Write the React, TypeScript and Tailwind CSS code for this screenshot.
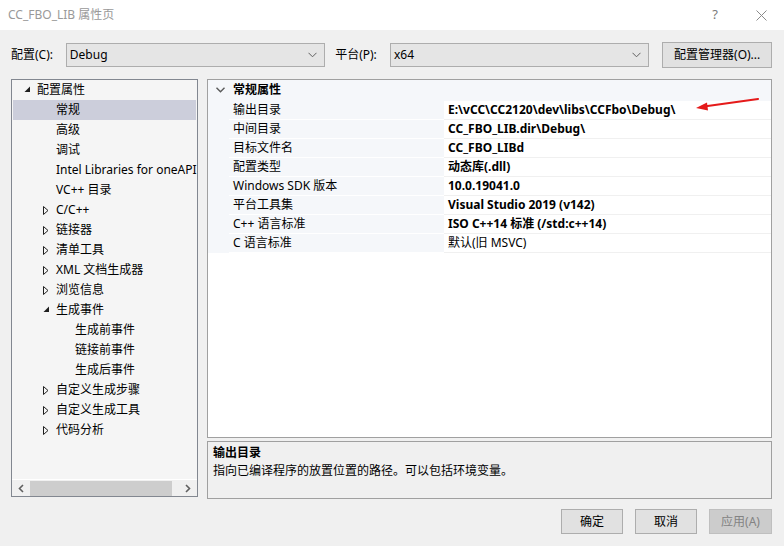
import React from 'react'

const font = { fontFamily: '"Noto Sans", "Noto Sans CJK SC", sans-serif' }

type TreeItem = { label: string; level: number; state?: 'open' | 'closed'; selected?: boolean }

const tree: TreeItem[] = [
  { label: '配置属性', level: 0, state: 'open' },
  { label: '常规', level: 1, selected: true },
  { label: '高级', level: 1 },
  { label: '调试', level: 1 },
  { label: 'Intel Libraries for oneAPI', level: 1 },
  { label: 'VC++ 目录', level: 1 },
  { label: 'C/C++', level: 1, state: 'closed' },
  { label: '链接器', level: 1, state: 'closed' },
  { label: '清单工具', level: 1, state: 'closed' },
  { label: 'XML 文档生成器', level: 1, state: 'closed' },
  { label: '浏览信息', level: 1, state: 'closed' },
  { label: '生成事件', level: 1, state: 'open' },
  { label: '生成前事件', level: 2 },
  { label: '链接前事件', level: 2 },
  { label: '生成后事件', level: 2 },
  { label: '自定义生成步骤', level: 1, state: 'closed' },
  { label: '自定义生成工具', level: 1, state: 'closed' },
  { label: '代码分析', level: 1, state: 'closed' },
]

const props: { name: string; value: string; bold: boolean }[] = [
  { name: '输出目录', value: 'E:\\vCC\\CC2120\\dev\\libs\\CCFbo\\Debug\\', bold: true },
  { name: '中间目录', value: 'CC_FBO_LIB.dir\\Debug\\', bold: true },
  { name: '目标文件名', value: 'CC_FBO_LIBd', bold: true },
  { name: '配置类型', value: '动态库(.dll)', bold: true },
  { name: 'Windows SDK 版本', value: '10.0.19041.0', bold: true },
  { name: '平台工具集', value: 'Visual Studio 2019 (v142)', bold: true },
  { name: 'C++ 语言标准', value: 'ISO C++14 标准 (/std:c++14)', bold: true },
  { name: 'C 语言标准', value: '默认(旧 MSVC)', bold: false },
]

// left offset of each tree level, inside the panel
const indent = [6, 25, 44]

function Chevron() {
  return (
    <svg width="9" height="6" viewBox="0 0 9 6" className="text-[#606060]">
      <path d="M0.5 0.8 L4.5 4.8 L8.5 0.8" fill="none" stroke="currentColor" strokeWidth="1" />
    </svg>
  )
}

function Combo({ value }: { value: string }) {
  return (
    <div className="flex h-6 w-[260px] items-center justify-between border border-[#adadad] bg-[#e5e5e5] pl-[3px] pr-[7px] text-[12px] text-black">
      <span>{value}</span>
      <Chevron />
    </div>
  )
}

function Btn({ label, disabled, w }: { label: string; disabled?: boolean; w: string }) {
  return (
    <div
      className={`flex h-[25px] ${w} items-center justify-center border text-[12px] ${
        disabled ? 'border-[#bfbfbf] bg-[#cccccc] text-[#838383]' : 'border-[#adadad] bg-[#e1e1e1] text-black'
      }`}
    >
      {label}
    </div>
  )
}

export default function App() {
  return (
    <div style={font} className="relative flex h-[546px] w-[784px] flex-col overflow-hidden bg-[#f0f0f0] text-[12px] text-black">
      {/* title bar */}
      <div className="flex h-[30px] items-center bg-white pl-2 text-[12px] text-[#999999]">
        <span className="flex-1">CC_FBO_LIB 属性页</span>
        <span className="w-[46px] text-center text-[13px] text-[#7a7a7a]">?</span>
        <span className="flex w-[46px] justify-center">
          <svg width="11" height="11" viewBox="0 0 11 11">
            <path d="M0.5 0.5 L10.5 10.5 M10.5 0.5 L0.5 10.5" stroke="#8a8a8a" strokeWidth="1" />
          </svg>
        </span>
      </div>

      {/* config row */}
      <div className="mt-[12px] flex items-center pl-[11px] pr-[12px]">
        <span className="w-[55px]">配置(C):</span>
        <Combo value="Debug" />
        <span className="ml-[10px] w-[55px]">平台(P):</span>
        <Combo value="x64" />
        <div className="ml-[13px] flex h-[26px] w-[110px] items-center justify-center border border-[#adadad] bg-[#e1e1e1]">
          配置管理器(O)...
        </div>
      </div>

      {/* main */}
      <div className="mt-[11px] flex pl-[11px] pr-[12px]">
        {/* tree */}
        <div className="flex h-[418px] w-[187px] flex-col border border-[#828790] bg-[#f5f5f5]">
          <div className="flex-1 overflow-hidden px-[1px]">
            {tree.map((t) => (
              <div
                key={t.label}
                className={`relative flex h-5 items-center whitespace-nowrap ${t.selected ? 'bg-[#cccedb]' : ''}`}
                style={{ paddingLeft: indent[t.level] + 18 }}
              >
                {t.state && (
                  <span className="absolute top-[6px]" style={{ left: indent[t.level] + 5 }}>
                    {t.state === 'open' ? (
                      <svg width="7" height="7" viewBox="0 0 7 7">
                        <path d="M6 0.5 L6 6 L0.5 6 Z" fill="#1e1e1e" />
                      </svg>
                    ) : (
                      <svg width="6" height="9" viewBox="0 0 6 9">
                        <path d="M0.5 0.5 L5 4.5 L0.5 8.5 Z" fill="none" stroke="#1e1e1e" strokeWidth="1" />
                      </svg>
                    )}
                  </span>
                )}
                <span>{t.label}</span>
              </div>
            ))}
          </div>
          <div className="flex h-[17px] items-center border-t border-white bg-[#f0f0f0]">
            <span className="flex w-[18px] justify-center">
              <svg width="6" height="9" viewBox="0 0 6 9">
                <path d="M5 1 L1.5 4.5 L5 8" fill="none" stroke="#606060" strokeWidth="1.6" />
              </svg>
            </span>
            <div className="h-[15px] w-[142px] bg-[#cdcdcd]" />
            <div className="flex-1" />
            <span className="flex w-[18px] justify-center">
              <svg width="6" height="9" viewBox="0 0 6 9">
                <path d="M1 1 L4.5 4.5 L1 8" fill="none" stroke="#606060" strokeWidth="1.6" />
              </svg>
            </span>
          </div>
        </div>

        {/* right column */}
        <div className="ml-[9px] flex flex-1 flex-col">
          <div className="h-[359px] border border-[#a0a0a0] bg-white">
            <div className="flex h-[21px] items-center bg-[#f5f7fa] pb-[1px]">
              <span className="flex w-[21px] justify-center pl-[3px]">
                <svg width="9" height="6" viewBox="0 0 9 6">
                  <path d="M0.5 0.8 L4.5 4.8 L8.5 0.8" fill="none" stroke="#5a5a5a" strokeWidth="1.4" />
                </svg>
              </span>
              <span className="pl-[4px] font-bold">常规属性</span>
            </div>
            {props.map((p) => (
              <div key={p.name} className="flex h-[19px]">
                <div className="w-[21px] bg-[#f5f7fa]" />
                <div className="flex w-[215px] items-center border-b border-white bg-[#f5f7fa] pl-[4px]">{p.name}</div>
                <div className={`flex flex-1 items-center border-b border-[#f0f0f0] pl-[4px] ${p.bold ? 'font-bold' : ''}`}>
                  {p.value}
                </div>
              </div>
            ))}
          </div>
          <div className="mt-[3px] h-[58px] border border-[#a0a0a0] bg-[#f0f0f0] px-[5px] pt-[2px]">
            <div className="font-bold leading-[18px]">输出目录</div>
            <div className="leading-[18px]">指向已编译程序的放置位置的路径。可以包括环境变量。</div>
          </div>
        </div>
      </div>

      {/* buttons */}
      <div className="mt-[10px] flex justify-end gap-[12px] pr-[12px]">
        <Btn label="确定" w="w-[62px]" />
        <Btn label="取消" w="w-[62px]" />
        <Btn label="应用(A)" w="w-[63px]" disabled />
      </div>

      {/* red annotation arrow */}
      <svg className="absolute left-[692px] top-[96px]" width="70" height="16" viewBox="0 0 70 16">
        <path d="M66 3 L12 10.5" stroke="#e51a1a" strokeWidth="2.2" strokeLinecap="round" />
        <path d="M4 12 L15 6.5 L16 14.5 Z" fill="#e51a1a" />
      </svg>
    </div>
  )
}
